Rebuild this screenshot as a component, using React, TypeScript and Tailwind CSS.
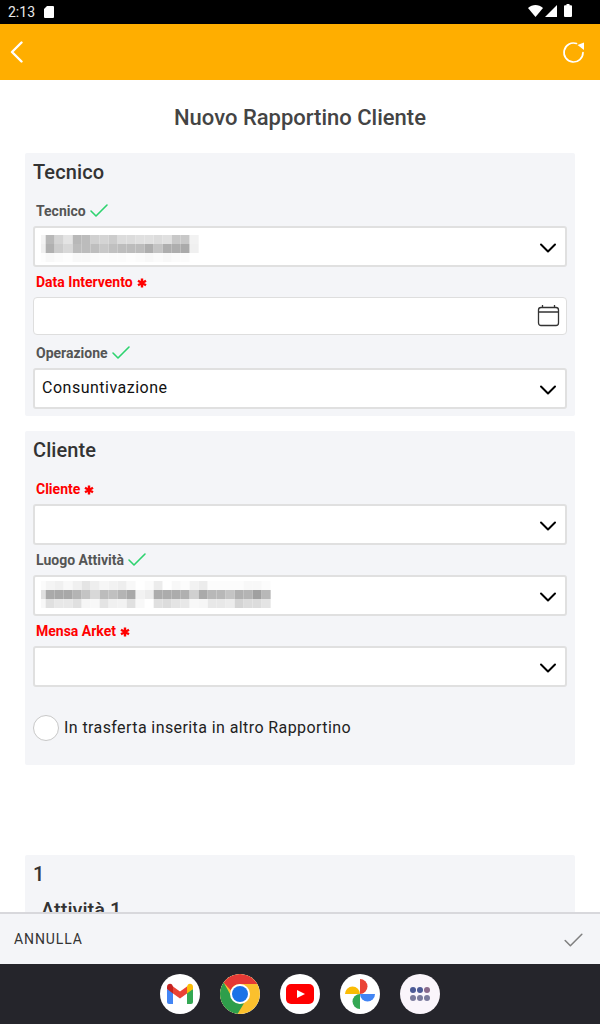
import { Check, ChevronDown } from "lucide-react";

const TECNICO_BLUR = [
  ["#f4f4f4", "#b8b8b8", "#d4d4d4", "#e4e4e4", "#b8b8b8", "#bcbcbc", "#d0d0d0", "#d4d4d4", "#cccccc", "#dcdcdc", "#dcdcdc", "#e0e0e0", "#e0e0e0", "#dcdcdc", "#e0e0e0", "#c8c8c8", "#c8c8c8", "#f2f2f2"],
  ["#f0f0f0", "#b0b0b0", "#cccccc", "#d8d8d8", "#bcbcbc", "#bcbcbc", "#bebebe", "#c8c8c8", "#c0c0c0", "#bdbdbd", "#bcbcbc", "#bcbcbc", "#aeaeae", "#c4c4c4", "#aeaeae", "#aeaeae", "#aaaaaa", "#f0f0f0"],
  ["#fdfdfd", "#f8f8f8", "#fbfbfb", "#fdfdfd", "#f8f8f8", "#f8f8f8", "#fbfbfb", "#fcfcfc", "#fbfbfb", "#fbfbfb", "#fdfdfd", "#fbfbfb", "#f8f8f8", "#fbfbfb", "#f8f8f8", "#fbfbfb", "#fbfbfb", "#ffffff"],
];

const LUOGO_BLUR = [
  ["#fbfbfb", "#f4f4f4", "#f0f0f0", "#f8f8f8", "#f0f0f0", "#e4e4e4", "#eeeeee", "#f6f6f6", "#f2f2f2", "#eeeeee", "#f8f8f8", "#ffffff", "#fbfbfb", "#ececec", "#ffffff", "#f8f8f8", "#fcfcfc", "#f2f2f2", "#ececec", "#fcfcfc", "#fcfcfc", "#fcfcfc", "#fcfcfc", "#f8f8f8", "#f8f8f8", "#fcfcfc"],
  ["#e0e0e0", "#aaaaaa", "#a8a8a8", "#a8a8a8", "#b4b4b4", "#c4c4c4", "#d8d8d8", "#bcbcbc", "#c0c0c0", "#b4b4b4", "#a8a8a8", "#f2f2f2", "#ececec", "#acacac", "#acacac", "#acacac", "#b0b0b0", "#d0d0d0", "#aaaaaa", "#b8b8b8", "#b8b8b8", "#c4c4c4", "#b0b0b0", "#b4b4b4", "#a0a0a0", "#b8b8b8"],
  ["#f8f8f8", "#e0e0e0", "#e8e8e8", "#e8e8e8", "#e0e0e0", "#f6f6f6", "#f8f8f8", "#e4e4e4", "#f0f0f0", "#f2f2f2", "#e0e0e0", "#f8f8f8", "#ffffff", "#e0e0e0", "#dcdcdc", "#e4e4e4", "#e8e8e8", "#f8f8f8", "#f6f6f6", "#e8e8e8", "#e8e8e8", "#ececec", "#d4d4d4", "#dcdcdc", "#dcdcdc", "#e4e4e4"],
];

// first column is a half cell, the blur grid starts left of the text
function Mosaic({ rows, className }: { rows: string[][]; className: string }) {
  return (
    <svg width={(rows[0].length - 1) * 9 + 4.67} height={rows.length * 9} className={`block ${className}`}>
      {rows.map((row, y) =>
        row.map((fill, x) => <rect key={x} x={x * 9 - 4.33} y={y * 9} width="9" height="9" fill={fill} />)
      )}
    </svg>
  );
}

function Asterisk() {
  return (
    <svg width="10" height="10" viewBox="0 0 10 10" className="ml-[4px] mt-0.5" stroke="#ff0000" strokeWidth="2.4">
      <path d="M5 0.500v9M1 2.800l8 4.400M9 2.800L1 7.200" />
    </svg>
  );
}

function FieldLabel({ text, required }: { text: string; required?: boolean }) {
  return (
    <div className={`flex h-[30px] items-center pl-[3px] text-[14px] font-bold ${required ? "text-[#ff0000]" : "text-[#555555]"}`}>
      <span>{text}</span>
      {required ? <Asterisk /> : <Check className="ml-[1px] h-[24px] w-[24px] text-[#2dd36f]" strokeWidth={1.6} />}
    </div>
  );
}

function SelectBox({ children }: { children?: React.ReactNode }) {
  return (
    <div className="flex h-[41px] items-center justify-between rounded-[3px] border-2 border-[#e0e0e0] bg-white pl-[7px] pr-[3px]">
      <div className="pb-[2px] text-[16px] tracking-[0.5px] text-[#111111]">{children}</div>
      <ChevronDown className="mt-[2px] h-[28px] w-[28px] text-black" strokeWidth={1.7} />
    </div>
  );
}

function DateBox() {
  return (
    <div className="mb-[3px] flex h-[38px] items-center justify-end rounded-[4px] border border-[#dedede] bg-white pr-[6px]">
      <svg width="24" height="24" viewBox="0 0 24 24" fill="none" stroke="#333333" strokeWidth="1.300">
        <rect x="2.500" y="3.500" width="20" height="18" rx="2.500" />
        <path d="M2.500 8h20M6.500 1v2.500M18.500 1v2.500" />
      </svg>
    </div>
  );
}

function GmailIcon() {
  return (
    <svg width="28" height="22" viewBox="0 0 28 22">
      <path d="M1 6v13a2 2 0 0 0 2 2h4V9z" fill="#4285f4" />
      <path d="M21 9v12h4a2 2 0 0 0 2-2V6z" fill="#34a853" />
      <path d="M7 10.500L14 15.500l7-5V3.500l-7 5-7-5z" fill="#ea4335" />
      <path d="M21 3.500v7l6-4.500V4c0-2.800-3-4-5-2.500z" fill="#fbbc04" />
      <path d="M7 3.500v7L1 6V4c0-2.800 3-4 5-2.500z" fill="#c5221f" />
    </svg>
  );
}

function ChromeIcon() {
  return (
    <svg width="40" height="40" viewBox="0 0 40 40">
      <circle cx="20" cy="20" r="20" fill="#fbc02d" />
      <path d="M20 0a20 20 0 0 1 17.300 10H20a10 10 0 0 0-9.300 6.300L3.600 8.500A20 20 0 0 1 20 0z" fill="#e53935" />
      <path d="M3.600 8.500l8.600 15.300A10 10 0 0 0 24 29.200L17.500 40A20 20 0 0 1 3.600 8.500z" fill="#2e9e4b" />
      <circle cx="20" cy="20" r="10" fill="#ffffff" />
      <circle cx="20" cy="20" r="8" fill="#1a73e8" />
    </svg>
  );
}

function YoutubeIcon() {
  return (
    <svg width="28" height="20" viewBox="0 0 28 20">
      <rect width="28" height="20" rx="5" fill="#ff0000" />
      <path d="M11 6l8 4-8 4z" fill="#ffffff" />
    </svg>
  );
}

function PhotosIcon() {
  return (
    <svg width="30" height="30" viewBox="0 0 30 30">
      <path d="M15 15V0a7.500 7.500 0 0 1 0 15z" fill="#ea4335" />
      <path d="M15 15h15a7.500 7.500 0 0 1-15 0z" fill="#4285f4" />
      <path d="M15 15v15a7.500 7.500 0 0 1 0-15z" fill="#34a853" />
      <path d="M15 15H0a7.500 7.500 0 0 1 15 0z" fill="#fbbc04" />
    </svg>
  );
}

function AppsIcon() {
  const colors = ["#4c5a96", "#4c5a96", "#8a6a8c", "#7a7a9c", "#7a7a9c", "#7a7a9c"];
  return (
    <div className="grid grid-cols-3 gap-x-[1.5px] gap-y-[2.5px]">
      {colors.map((c, i) => (
        <span key={i} className="h-[5.5px] w-[5.5px] rounded-full" style={{ backgroundColor: c }} />
      ))}
    </div>
  );
}

function NavApp({ children, bg = "bg-white" }: { children: React.ReactNode; bg?: string }) {
  return <div className={`flex h-10 w-10 items-center justify-center overflow-hidden rounded-full ${bg}`}>{children}</div>;
}

export default function App() {
  return (
    <div className="flex h-[1024px] w-[600px] flex-col overflow-hidden bg-white font-['Roboto',sans-serif]">
      {/* Status bar */}
      <div className="flex h-6 shrink-0 items-center justify-between bg-black pl-[8px] pr-[28px] text-white">
        <div className="flex items-center gap-[9px]">
          <span className="text-[14px] leading-none text-[#e8e8e8]">2:13</span>
          <svg width="10" height="12" viewBox="0 0 10 12" fill="#ffffff">
            <path d="M3 0h6a1 1 0 0 1 1 1v10a1 1 0 0 1-1 1H1a1 1 0 0 1-1-1V3z" />
          </svg>
        </div>
        <div className="-mt-[2px] flex items-center gap-[2px]">
          <svg width="15" height="12" viewBox="0 0 15 12" fill="#ffffff"><path d="M0 3C2 1 5 0 7.500 0s5.500 1 7.500 3L7.500 12z" /></svg>
          <svg width="12" height="12" viewBox="0 0 12 12" fill="#ffffff"><path d="M12 0v12H0z" /></svg>
          <svg width="8" height="13" viewBox="0 0 8 13" fill="#ffffff" className="-mt-[1px] ml-[5px]"><path d="M2.500 0h3v1.200H7a1 1 0 0 1 1 1V12a1 1 0 0 1-1 1H1a1 1 0 0 1-1-1V2.200a1 1 0 0 1 1-1h1.500z" /></svg>
        </div>
      </div>

      {/* Header */}
      <div className="flex h-14 shrink-0 items-center justify-between bg-[#ffae00] pl-[9px] pr-[14px]">
        <svg width="15" height="22" viewBox="0 0 15 22" fill="none" stroke="#ffffff" strokeWidth="2.400" strokeLinecap="round" strokeLinejoin="round">
          <path d="M12.500 1.500L3 11l9.500 9.500" />
        </svg>
        <svg width="24" height="24" viewBox="0 0 24 24" fill="none" stroke="#ffffff" strokeWidth="1.700" strokeLinecap="round">
          <path d="M14.500 3.500A9.500 9.500 0 1 0 21 12.500" />
          <path d="M15.500 5l6.500-2.500v7.500z" fill="#ffffff" stroke="none" />
        </svg>
      </div>

      {/* Content */}
      <div className="min-h-0 flex-1 overflow-hidden">
        <h1 className="mt-[24px] h-[49px] text-center text-[22px] font-medium leading-[27px] text-[#444444]">
          Nuovo Rapportino Cliente
        </h1>

        <section className="mx-[25px] rounded-[2px] bg-[#f4f5f8] px-[8px] pb-[7px] pt-[7px]">
          <h2 className="mb-[11px] h-[25px] text-[20px] font-medium leading-[25px] tracking-[0.1px] text-[#333333]">Tecnico</h2>
          <FieldLabel text="Tecnico" />
          <SelectBox>
            <Mosaic rows={TECNICO_BLUR} className="-ml-[1px] mt-[6px]" />
          </SelectBox>
          <FieldLabel text="Data Intervento" required />
          <DateBox />
          <FieldLabel text="Operazione" />
          <SelectBox>Consuntivazione</SelectBox>
        </section>

        <section className="mx-[25px] mt-[15px] rounded-[2px] bg-[#f4f5f8] px-[8px] pb-[24px] pt-[7px]">
          <h2 className="mb-[11px] h-[25px] text-[20px] font-medium leading-[25px] tracking-[0.1px] text-[#333333]">Cliente</h2>
          <FieldLabel text="Cliente" required />
          <SelectBox />
          <FieldLabel text="Luogo Attività" />
          <SelectBox>
            <Mosaic rows={LUOGO_BLUR} className="-ml-[1px] -mt-[1px]" />
          </SelectBox>
          <FieldLabel text="Mensa Arket" required />
          <SelectBox />
          <div className="mt-[28px] flex items-center gap-[5px]">
            <span className="h-[26px] w-[26px] rounded-full border border-[#c8c8c8] bg-white" />
            <span className="text-[16px] tracking-[0.41px] text-[#222222]">In trasferta inserita in altro Rapportino</span>
          </div>
        </section>

        <section className="mx-[25px] mt-[90px] h-[80px] rounded-[2px] bg-[#f4f5f8] px-[8px] pt-[7px]">
          <h2 className="h-[25px] text-[20px] font-medium leading-[25px] text-[#333333]">1</h2>
          <h3 className="ml-[8px] mt-[12px] text-[20px] font-medium leading-[22px] text-[#333333]">Attività 1</h3>
        </section>
      </div>

      {/* Footer actions */}
      <div className="flex h-[52px] shrink-0 items-center justify-between border-t-2 border-[#d8d8dc] bg-[#f4f5f8] pl-[14px] pr-[14px]">
        <span className="mt-[1px] text-[14px] tracking-[0.9px] text-[#333333]">ANNULLA</span>
        <Check className="mt-[2px] h-[25px] w-[25px] text-[#808080]" strokeWidth={1.5} />
      </div>

      {/* Android nav dock */}
      <div className="flex h-[60px] shrink-0 items-center justify-center gap-5 bg-[#25252b]">
        <NavApp><GmailIcon /></NavApp>
        <NavApp><ChromeIcon /></NavApp>
        <NavApp><YoutubeIcon /></NavApp>
        <NavApp><PhotosIcon /></NavApp>
        <NavApp bg="bg-[#faf5fb]"><AppsIcon /></NavApp>
      </div>
    </div>
  );
}
